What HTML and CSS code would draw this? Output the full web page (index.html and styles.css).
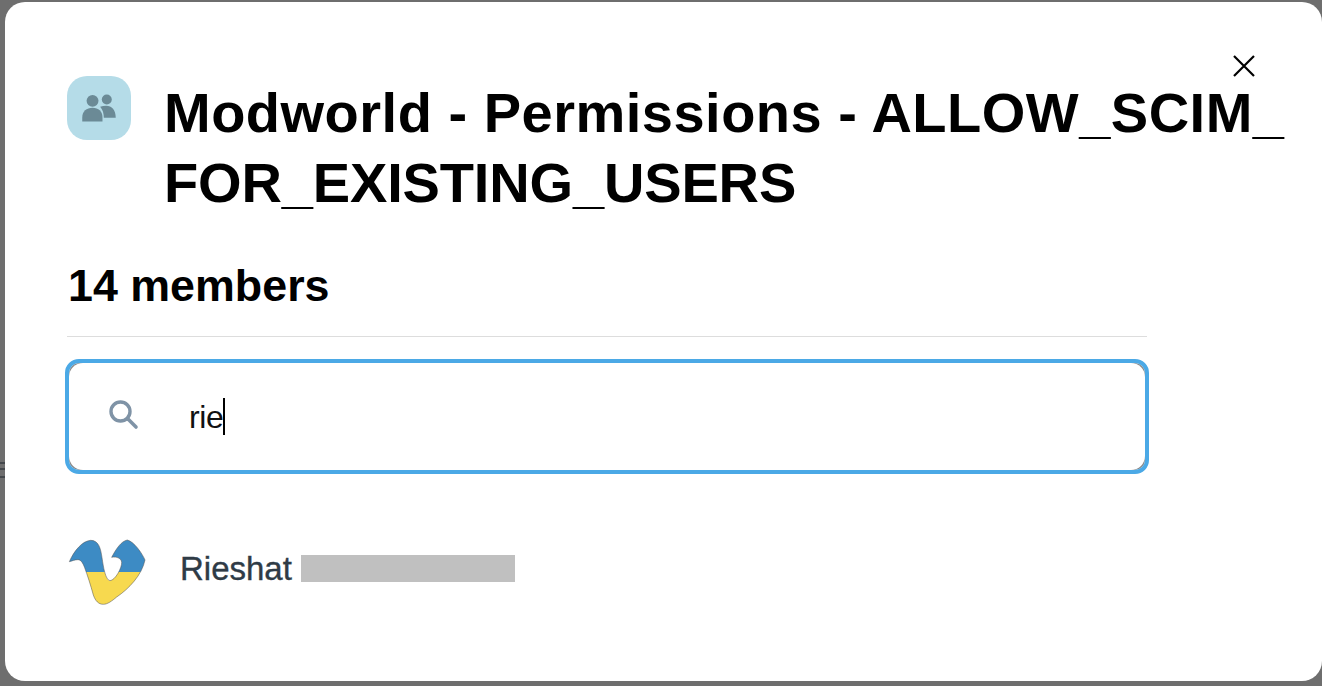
FILE: index.html
```html
<!DOCTYPE html>
<html lang="en">
<head>
<meta charset="utf-8">
<title>Modworld - Permissions</title>
<link rel="stylesheet" href="styles.css">
</head>
<body>
<div class="behind"></div>
<div class="modal">
  <button class="close" aria-label="Close">
    <svg viewBox="0 0 22 22" width="22" height="22"><path d="M1 1L21 21M21 1L1 21" fill="none" stroke="#000" stroke-width="2.2"/></svg>
  </button>
  <header class="head">
    <div class="tile">
      <svg viewBox="50 47 193 193" width="64" height="64">
        <circle cx="170" cy="118" r="15" fill="#6b8a96"/>
        <path d="M150 140c6-2 12-3 18-3 17 0 29 13 29 36h-36c0-12-3-24-11-33z" fill="#6b8a96"/>
        <circle cx="127" cy="122" r="18" fill="#6b8a96"/>
        <path d="M96 184v-12c0-18 13-29 31-29s30 11 30 29v12z" fill="#6b8a96"/>
      </svg>
    </div>
    <h1 class="title"><span class="line-a">Modworld - Permissions - ALLOW_SCIM_</span><wbr><span class="line-b">FOR_EXISTING_USERS</span></h1>
  </header>
  <section class="body">
    <h2 class="count">14 members</h2>
    <div class="search">
      <svg class="glass" viewBox="0 0 30 30" width="30" height="30"><circle cx="11.5" cy="11.5" r="9.5" fill="none" stroke="#7f93a6" stroke-width="3.4"/><path d="M19 19L27 27" stroke="#7f93a6" stroke-width="3.6" stroke-linecap="round"/></svg>
      <span class="query">rie</span><span class="caret"></span>
    </div>
    <div class="member">
      <svg class="avatar" viewBox="45 30 255 225" width="85" height="75">
        <defs>
          <clipPath id="vshape"><path id="vpath" d="M58 110C72 78 96 48 122 46C146 46 152 70 156 98C160 125 166 165 180 167C196 166 216 128 215 112C214 100 200 94 185 97C198 72 214 48 232 45C252 50 276 84 285 105C276 150 236 192 200 216C186 228 172 238 160 238C146 238 136 228 130 210C122 180 112 150 104 128C98 112 92 104 84 104C74 104 66 108 58 110Z"/></clipPath>
        </defs>
        <g clip-path="url(#vshape)">
          <rect x="45" y="30" width="255" height="111" fill="#3d8bc4"/>
          <rect x="45" y="141" width="255" height="114" fill="#f7d94f"/>
        </g>
        <use href="#vpath" fill="none" stroke="#555" stroke-width="1.6"/>
      </svg>
      <span class="name">Rieshat</span>
      <span class="redact"></span>
    </div>
  </section>
</div>
</body>
</html>
```
FILE: styles.css
```css
* { box-sizing: border-box; }
html, body { margin: 0; height: 100%; }
body {
  background: #6e6e6e;
  padding: 2px 0 4px 5px;
  overflow: hidden;
  font-family: "Liberation Sans", Arial, sans-serif;
}
.behind {
  position: absolute;
  top: 462px;
  left: 0;
  width: 5px;
  height: 17px;
  background: linear-gradient(#44484c 0 2px, transparent 2px 6px, #44484c 6px 8px, transparent 8px 14px, #44484c 14px 16px, transparent 16px);
}
.modal {
  position: relative;
  height: 679px;
  background: #fff;
  border-radius: 20px;
  padding: 75px 0 0 62px;
}
.close {
  position: absolute;
  top: 53px;
  left: 1228px;
  width: 22px;
  height: 22px;
  padding: 0;
  border: 0;
  background: none;
  display: block;
}
.close svg { display: block; }
.head { display: flex; align-items: flex-start; gap: 33px; margin-top: -1px; }
.tile {
  flex: none;
  width: 64px;
  height: 64px;
  border-radius: 20px;
  background: #b5dce8;
}
.tile svg { display: block; }
.title {
  margin: 0;
  padding-top: 2px;
  width: 1130px;
  font-size: 56px;
  line-height: 70px;
  font-weight: 700;
  color: #000;
}
.line-a { letter-spacing: 0.5px; }
.line-b { letter-spacing: -0.15px; }
.body { width: 1080px; margin-top: 41px; }
.count {
  margin: 0;
  height: 78px;
  padding-bottom: 25px;
  padding-left: 1px;
  font-size: 44.8px;
  line-height: 52px;
  font-weight: 700;
  color: #000;
  border-bottom: 1px solid #ddd;
}
.search {
  position: relative;
  display: flex;
  align-items: center;
  height: 115px;
  margin: 22px -2px 0;
  padding-left: 38px;
  border: 4px solid #4ba9e6;
  border-radius: 14px;
  background: #8a8a8a;
  background-clip: padding-box;
}
.search::before {
  content: "";
  position: absolute;
  inset: 0;
  border-radius: 14px;
  background: #fff;
}
.glass { position: relative; flex: none; margin-right: 50px; margin-bottom: 4px; margin-left: 2px; }
.query { position: relative; font-size: 32px; letter-spacing: -0.4px; color: #111; line-height: 40px; }
.caret { position: relative; width: 2px; height: 37px; background: #000; }
.member { display: flex; align-items: center; margin-top: 53px; margin-left: -2px; }
.avatar { flex: none; margin-right: 30px; margin-top: 8px; }
.name { font-size: 33px; line-height: 40px; color: #2f3b46; -webkit-text-stroke: 0.35px #2f3b46; }
.redact { width: 214px; height: 27px; margin-left: 9px; background: #c0c0c0; }
```
